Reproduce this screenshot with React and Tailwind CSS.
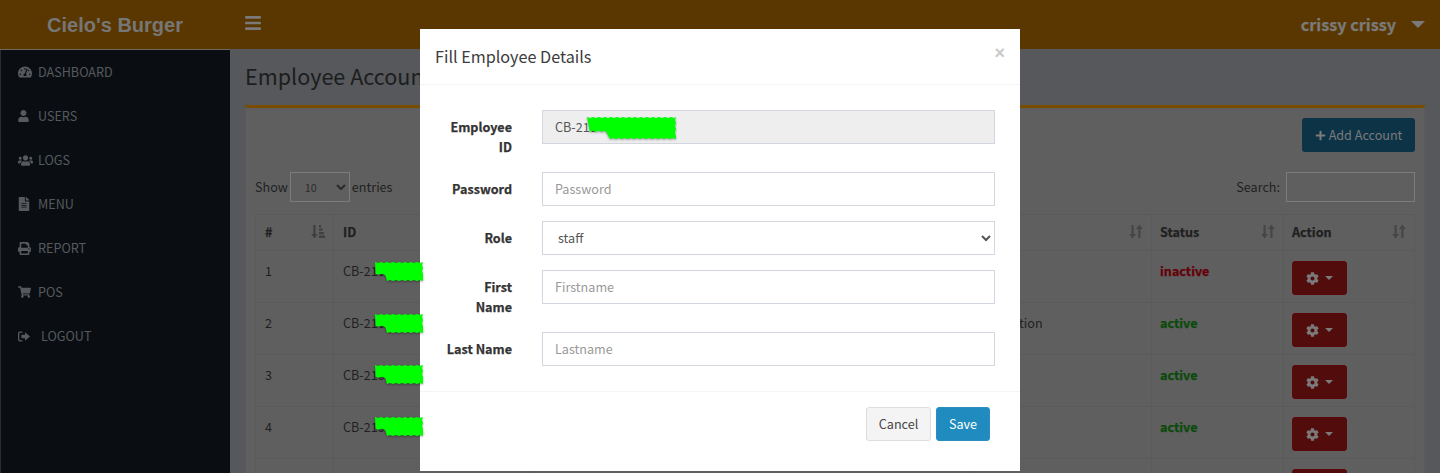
import React from 'react';
import { FaTachometerAlt, FaUser, FaUsers, FaFileAlt, FaPrint, FaShoppingCart, FaBars, FaPlus, FaCog } from 'react-icons/fa';

const sans = 'font-["Noto_Sans_CJK_SC","Noto_Sans",sans-serif]';
const heavy = 'font-bold [-webkit-text-stroke:0.25px_currentColor]';

const navItems = [
  { label: 'DASHBOARD', icon: <FaTachometerAlt className="w-[14px] h-[14px]" /> },
  { label: 'USERS', icon: <FaUser className="w-[11px] h-[12px]" /> },
  { label: 'LOGS', icon: <FaUsers className="w-[15px] h-[15px]" /> },
  { label: 'MENU', icon: <FaFileAlt className="w-[12px] h-[14px]" /> },
  { label: 'REPORT', icon: <FaPrint className="w-[13px] h-[13px]" /> },
  { label: 'POS', icon: <FaShoppingCart className="w-[13px] h-[12px]" /> },
];

const rows = [
  { n: 1, id: 'CB-210', status: 'inactive', role: '' },
  { n: 2, id: 'CB-210', status: 'active', role: 'Production' },
  { n: 3, id: 'CB-210', status: 'active', role: '' },
  { n: 4, id: 'CB-210', status: 'active', role: '' },
  { n: '', id: '', status: '', role: '' },
];

function SignOutIcon() {
  return (
    <svg width="12" height="11" viewBox="0 0 12 11" fill="currentColor">
      <path d="M4.5 0.5H2C0.9 0.5 0 1.4 0 2.5v6c0 1.1.9 2 2 2h2.5V9.2H2.2c-.5 0-.9-.4-.9-.9V2.7c0-.5.4-.9.9-.9h2.3z" />
      <path d="M7 1.2 12 5.5 7 9.8V7.3H3.4V3.7H7z" />
    </svg>
  );
}

function SortIcon() {
  return (
    <svg width="14" height="15" viewBox="0 0 14 15" fill="currentColor">
      <path d="M2.500 1h2.200v9h2.300L3.600 14.500.2 10h2.300z" />
      <path d="M9.300 5H7L10.400.5 13.800 5h-2.300v9H9.300z" />
    </svg>
  );
}

function SortAmountIcon() {
  return (
    <svg width="14" height="15" viewBox="0 0 14 15" fill="currentColor">
      <path d="M2.300 1h2.200v9h2.100L3.400 14.500.2 10h2.100z" />
      <path d="M8 1h2v2.200H8zM8 4.500h3.500v2.200H8zM8 8h5v2.200H8zM8 11.500h6v2.500H8z" />
    </svg>
  );
}

function Caret({ className }) {
  return <span className={`inline-block w-0 h-0 border-x-[4px] border-x-transparent border-t-[4px] ${className}`} />;
}

// the green scribbles drawn over the ids
function Scribble({ w, h, className }) {
  const pts = [];
  const step = 3;
  for (let x = 0; x <= w; x += step) pts.push([x, (x / step) % 2 ? 1 : 0]);
  for (let y = 0; y <= h * 0.72; y += step) pts.push([w - ((y / step) % 2 ? 1 : 0), y]);
  pts.push([w, h - 2]);
  for (let x = w; x >= w * 0.24; x -= step) pts.push([x, h - (Math.round(x / step) % 2 ? 1 : 0)]);
  pts.push([w * 0.22, h * 0.72]);
  for (let x = w * 0.2; x >= 0; x -= step) pts.push([x, h * 0.62 + (Math.round(x / step) % 2 ? 1 : 0)]);
  return (
    <svg width={w} height={h} viewBox={`0 0 ${w} ${h}`} className={`absolute z-30 drop-shadow-[0_1px_1px_rgba(0,0,0,0.35)] ${className}`}>
      <polygon points={pts.map((p) => p.join(',')).join(' ')} fill="#00ff00" />
    </svg>
  );
}

function Field({ label, children }) {
  return (
    <div className="flex mb-[15px]">
      <label className={`w-[77px] pt-[7px] text-right leading-[20px] text-[#333] ${heavy}`}>{label}</label>
      <div className="ml-[30px] w-[453px]">{children}</div>
    </div>
  );
}

const inputClass = 'block w-full h-[34px] px-3 pb-[2px] border border-[#d2d6de] bg-white text-[12.6px] text-[#555] placeholder:text-[#999] outline-none';
const cell = 'pl-2 pr-2 border border-[#5a5a5a]';
const firstCell = 'pl-[9px] pr-2 border border-[#5a5a5a]';

export default function App() {
  return (
    <div className={`relative h-[473px] w-[1440px] overflow-hidden bg-[#56585b] text-[12.6px] leading-[20px] ${sans}`}>
      {/* top bar */}
      <header className="flex h-[49px] bg-[#5a3700]">
        <div className={`w-[230px] shrink-0 text-center text-[20px] leading-[50px] font-bold text-[#767676] font-["Liberation_Sans",sans-serif]`}>
          Cielo's Burger
        </div>
        <div className="flex flex-1 items-center justify-between px-[15px]">
          <FaBars className="w-[18px] h-[18px] -mt-[3px] -ml-[1px] text-[#7a7a7a]" />
          <div className="flex items-center gap-[15px] -mt-[1px]">
            <span className={`text-[16.2px] text-[#7a7a7a] ${heavy}`}>crissy crissy</span>
            <Caret className="border-x-[7px]! border-t-[7px]! border-t-[#7a7a7a]" />
          </div>
        </div>
      </header>
      <div className="h-px w-[230px] bg-[#6f6a5e]" />

      <div className="flex h-[423px]">
        {/* sidebar */}
        <aside className="w-[230px] shrink-0 bg-[#0a0e12] border-l border-[#2a2c2e] text-[#565a5e]">
          {navItems.map((item) => (
            <div key={item.label} className="flex h-[44px] items-center pl-[17px]">
              <span className="w-[20px] flex items-center">{item.icon}</span>
              <span>{item.label}</span>
            </div>
          ))}
          <div className="flex h-[44px] items-center pl-[17px]">
            <span className="w-[23px] flex items-center"><SignOutIcon /></span>
            <span>LOGOUT</span>
          </div>
        </aside>

        {/* page content */}
        <main className="flex-1 min-w-0 px-[15px]">
          <h1 className="h-[58px] pt-[11px] text-[21.6px] leading-[30px] text-[#1c1d1e] border-b-[3px] border-[#7a4c00] rounded-[3px]">
            Employee Accounts
          </h1>
          <section className="h-[400px] px-[9px] pt-[10px] bg-[#5f5f5f] border-x border-[#5a5a5a]">
            <div className="flex justify-end">
              <button className="flex h-[34px] w-[113px] items-center justify-center gap-[3px] rounded-[3px] bg-[#0d3347] text-[#7b7b7b]">
                <FaPlus className="w-[11px] h-[11px]" /> Add Account
              </button>
            </div>
            <div className="flex items-center justify-between mt-[20px] h-[30px] text-[#1f1f1f]">
              <div className="flex items-center gap-[2px]">
                Show
                <select className="w-[60px] h-[30px] pl-[10px] border border-[#7b7b7b] text-[10.8px] text-[#2b2b2b]">
                  <option>10</option>
                </select>
                entries
              </div>
              <div className="flex items-center gap-[6px]">
                Search:
                <input className="w-[129px] h-[30px] border border-[#7b7b7b]" />
              </div>
            </div>
            <table className="mt-[12px] w-[1160px] table-fixed border-collapse text-[#1f1f1f]">
              <thead>
                <tr className={`h-[36px] text-left ${heavy}`}>
                  <th className={`w-[78px] pb-[2px] font-bold ${firstCell}`}>
                    <div className="flex items-center justify-between">
                      #<span className="text-[#3f3f3f]"><SortAmountIcon /></span>
                    </div>
                  </th>
                  <th className={`w-[200px] pb-[2px] font-bold ${firstCell}`}>ID</th>
                  <th className={`w-[435px] pb-[2px] font-bold ${cell}`}>Name</th>
                  <th className={`w-[183px] pb-[2px] font-bold ${cell}`}>
                    <div className="flex items-center justify-between">
                      Job<span className="text-[#464646]"><SortIcon /></span>
                    </div>
                  </th>
                  <th className={`w-[132px] pb-[2px] font-bold ${cell}`}>
                    <div className="flex items-center justify-between">
                      Status<span className="text-[#464646]"><SortIcon /></span>
                    </div>
                  </th>
                  <th className={`pb-[2px] font-bold ${cell}`}>
                    <div className="flex items-center justify-between">
                      Action<span className="text-[#464646]"><SortIcon /></span>
                    </div>
                  </th>
                </tr>
              </thead>
              <tbody>
                {rows.map((row, i) => (
                  <tr key={i} className="h-[52px] align-top">
                    <td className={`${firstCell} pt-[10px]`}>{row.n}</td>
                    <td className={`${firstCell} pt-[10px]`}>{row.id}</td>
                    <td className={`${cell} pt-[10px]`} />
                    <td className={`${cell} pt-[10px]`}>{row.role}</td>
                    <td className={`${cell} pt-[10px] ${heavy} ${row.status === 'inactive' ? 'text-[#650008]' : 'text-[#0a4a0a]'}`}>
                      {row.status}
                    </td>
                    <td className={`${cell} pt-[10px]`}>
                      <button className="flex h-[34px] w-[55px] items-center justify-center gap-[6px] rounded-[3px] bg-[#520c0c] border border-[#5c0808] text-[#7a7a7a]">
                        <FaCog className="w-[13px] h-[13px]" />
                        <Caret className="border-t-[#7a7a7a]" />
                      </button>
                    </td>
                  </tr>
                ))}
              </tbody>
            </table>
          </section>
        </main>
      </div>

      {/* modal */}
      <div className="absolute z-20 left-[420px] top-[29px] w-[600px] h-[442px] bg-white text-[#333]">
        <div className="relative h-[56px] px-[15px] pt-[15px] border-b border-[#f4f4f4]">
          <h4 className="text-[16.2px] leading-[25px] text-[#3c3c3c]">Fill Employee Details</h4>
          <span className={`absolute right-[15px] top-[13px] text-[18px] leading-[22px] font-bold text-[#c9c9c9] font-["Liberation_Sans",sans-serif]`}>×</span>
        </div>
        <div className="px-[15px] pt-[25px] h-[307px] border-b border-[#f4f4f4]">
          <Field label="Employee ID">
            <input readOnly value="CB-210" className={`${inputClass} bg-[#eeeeee]!`} />
          </Field>
          <Field label="Password">
            <input placeholder="Password" className={inputClass} />
          </Field>
          <Field label="Role">
            <select className={`${inputClass} pl-[11px]`} defaultValue="staff">
              <option>staff</option>
            </select>
          </Field>
          <Field label={<>First<br />Name</>}>
            <input placeholder="Firstname" className={inputClass} />
          </Field>
          <Field label="Last Name">
            <input placeholder="Lastname" className={inputClass} />
          </Field>
        </div>
        <div className="flex justify-end gap-[5px] pr-[30px] pt-[15px]">
          <button className="h-[34px] w-[65px] rounded-[3px] border border-[#dddddd] bg-[#f4f4f4] text-[#444]">Cancel</button>
          <button className="h-[34px] w-[54px] rounded-[3px] border border-[#2a8fc0] bg-[#208bbe] text-white">Save</button>
        </div>
      </div>

      <Scribble w={89} h={22} className="left-[587px] top-[117px]" />
      <Scribble w={48} h={19} className="left-[375px] top-[262px]" />
      <Scribble w={48} h={19} className="left-[375px] top-[314px]" />
      <Scribble w={48} h={19} className="left-[375px] top-[365px]" />
      <Scribble w={48} h={19} className="left-[375px] top-[417px]" />
    </div>
  );
}
